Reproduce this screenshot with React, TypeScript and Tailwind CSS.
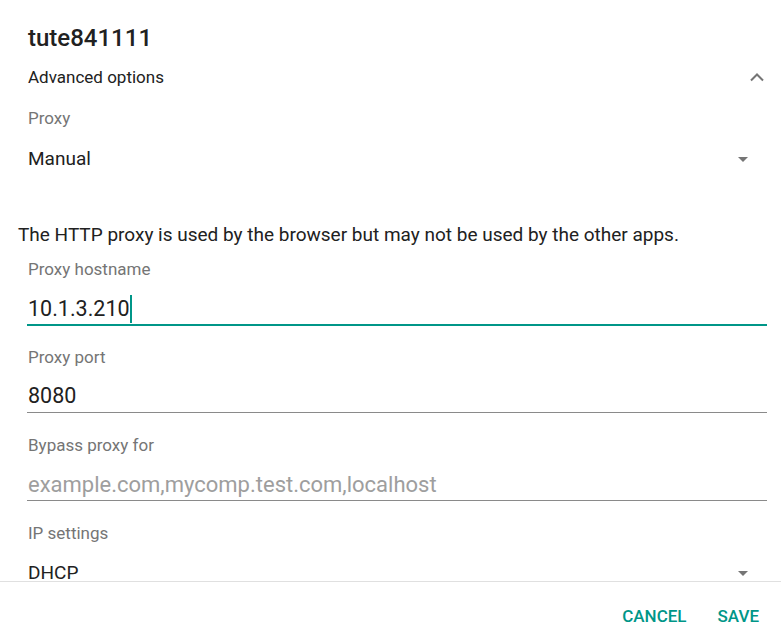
import React from 'react';

function Label({ text, className }: { text: string; className: string }) {
  return <div className={`h-[20px] text-[17px] leading-[20px] text-[#757575] ${className}`}>{text}</div>;
}

function DropArrow() {
  return (
    <svg width="10" height="5" viewBox="0 0 10 5" className="mr-[33px]">
      <path d="M0 0h10L5 5z" fill="#757575" />
    </svg>
  );
}

export default function App() {
  return (
    <div className="w-[781px] h-[641px] bg-white flex flex-col text-[#212121]" style={{ fontFamily: 'Roboto, "Noto Sans", sans-serif' }}>
      <div className="h-[581px] overflow-hidden">
        <div className="pt-[24px] pl-[28px] h-[52px] text-[24px] leading-[28px] font-medium">tute841111</div>

        <div className="mt-[13px] h-[24px] pl-[28px] flex items-center justify-between">
          <span className="text-[17px] leading-[24px]">Advanced options</span>
          <svg width="16" height="10" viewBox="0 0 16 10" className="mr-[16px] -mt-[1px]">
            <path d="M2 8.5L8 2.5L14 8.5" stroke="#757575" strokeWidth="2" fill="none" />
          </svg>
        </div>

        <Label text="Proxy" className="mt-[19px] pl-[28px]" />
        <div className="mt-[19px] h-[24px] pl-[28px] flex items-center justify-between">
          <span className="text-[19px] leading-[24px]">Manual</span>
          <DropArrow />
        </div>

        <p className="mt-[52px] pl-[18px] h-[24px] text-[19px] leading-[24px]">
          The HTTP proxy is used by the browser but may not be used by the other apps.
        </p>

        <Label text="Proxy hostname" className="mt-[12px] pl-[28px]" />
        <div className="mt-[15px] ml-[27px] mr-[14px] pb-[1px] border-b-2 border-[#009688]">
          <div className="pl-[1px] h-[29px] flex items-center text-[21.5px] leading-[29px]">
            <span>10.1.3.210</span>
            <span className="w-[2px] h-[28px] bg-[#009688]" />
          </div>
        </div>

        <Label text="Proxy port" className="mt-[21px] pl-[28px]" />
        <div className="mt-[14px] ml-[27px] mr-[14px] pb-[2px] border-b border-[#8a8a8a]">
          <div className="pl-[1px] h-[29px] text-[21.5px] leading-[29px]">8080</div>
        </div>

        <Label text="Bypass proxy for" className="mt-[22px] pl-[28px]" />
        <div className="mt-[15px] ml-[27px] mr-[14px] pb-[1px] border-b border-[#8a8a8a]">
          <div className="pl-[1px] h-[29px] text-[22px] leading-[29px] text-[#9e9e9e]">example.com,mycomp.test.com,localhost</div>
        </div>

        <Label text="IP settings" className="mt-[22px] pl-[28px]" />
        <div className="mt-[18px] h-[24px] pl-[28px] flex items-center justify-between">
          <span className="text-[19px] leading-[24px]">DHCP</span>
          <DropArrow />
        </div>
      </div>

      <div className="border-t border-[#e0e0e0] flex-1 flex items-center justify-end pt-[10px] pr-[22px] gap-[31px] text-[17px] font-medium text-[#009688]">
        <span>CANCEL</span>
        <span>SAVE</span>
      </div>
    </div>
  );
}
